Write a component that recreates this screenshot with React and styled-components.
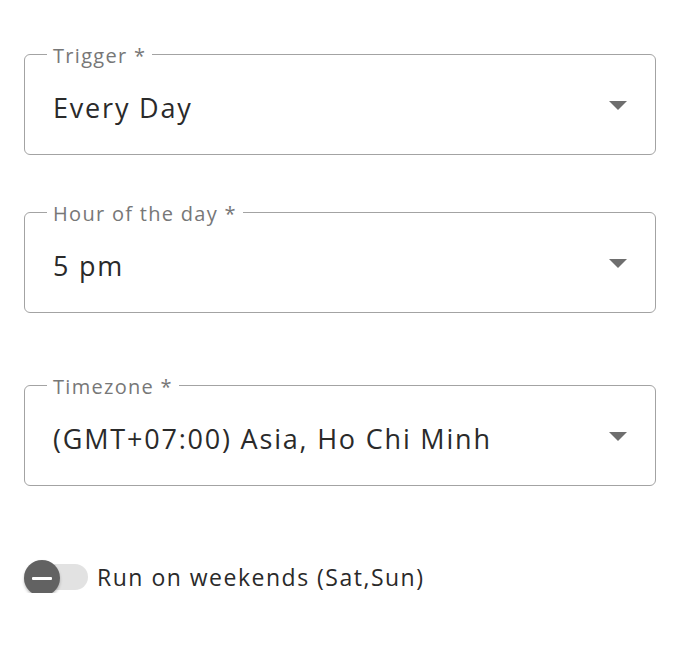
import React from "react";
import styled, { createGlobalStyle } from "styled-components";

const GlobalStyle = createGlobalStyle`
  body {
    margin: 0;
    background: #fff;
    font-family: "Open Sans", "Noto Sans", sans-serif;
  }
`;

const Page = styled.div`
  padding: 44px 23px 0 24px;
  display: flex;
  flex-direction: column;
`;

const Field = styled.fieldset`
  margin: 0 0 ${(p) => p.$gap || 0}px 0;
  padding: 0 28px 0 28px;
  border: 1px solid #a3a3a3;
  border-radius: 6px;
  min-width: 0;
`;

const Legend = styled.legend`
  margin-left: -6px;
  padding: 0 6px;
  font-size: 20px;
  line-height: 20px;
  color: #777;
  letter-spacing: 1.3px;

  span {
    position: relative;
    top: 2px;
  }
`;

const Row = styled.div`
  height: 90px;
  display: flex;
  align-items: center;
  justify-content: space-between;
`;

const Value = styled.span`
  font-size: 27px;
  color: #2a2a2a;
  letter-spacing: 1.8px;
  padding-bottom: 4px;
`;

const Arrow = styled.svg`
  width: 18px;
  height: 9px;
  margin-bottom: 8px;
  fill: #6e6e6e;
`;

const SwitchRow = styled.label`
  margin-top: 75px;
  display: flex;
  align-items: center;
  gap: 9px;
`;

const Track = styled.span`
  position: relative;
  width: 64px;
  height: 26px;
  border-radius: 13px;
  background: #e2e2e2;
`;

const Thumb = styled.span`
  position: absolute;
  left: 0;
  top: -4px;
  width: 36px;
  height: 36px;
  border-radius: 50%;
  background: #626262;
  box-shadow: 0 2px 3px rgba(0, 0, 0, 0.25);
  display: flex;
  align-items: center;
  justify-content: center;
`;

const Minus = styled.span`
  width: 20px;
  height: 3px;
  background: #fff;
  border-radius: 1px;
`;

const SwitchText = styled.span`
  font-size: 23px;
  color: #2a2a2a;
  letter-spacing: 1.5px;
`;

const SelectField = ({ label, value, gap }) => (
  <Field $gap={gap}>
    <Legend>
      <span>{label} *</span>
    </Legend>
    <Row>
      <Value>{value}</Value>
      <Arrow viewBox="0 0 18 9">
        <polygon points="0,0 18,0 9,9" />
      </Arrow>
    </Row>
  </Field>
);

export default function App() {
  return (
    <>
      <GlobalStyle />
      <Page>
        <SelectField label="Trigger" value="Every Day" gap={47} />
        <SelectField label="Hour of the day" value="5 pm" gap={62} />
        <SelectField label="Timezone" value="(GMT+07:00) Asia, Ho Chi Minh" />
        <SwitchRow>
          <Track>
            <Thumb>
              <Minus />
            </Thumb>
          </Track>
          <SwitchText>Run on weekends (Sat,Sun)</SwitchText>
        </SwitchRow>
      </Page>
    </>
  );
}
